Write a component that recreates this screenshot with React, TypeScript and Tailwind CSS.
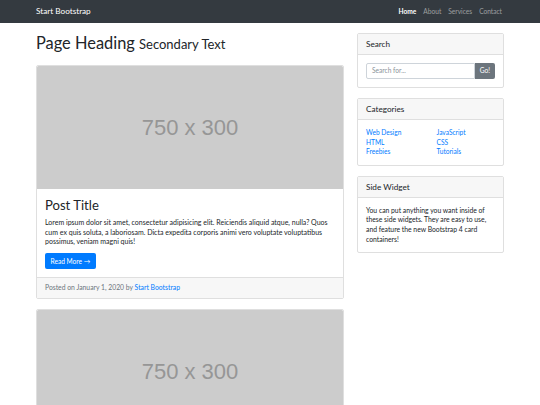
const categories = [
  ['Web Design', 'JavaScript'],
  ['HTML', 'CSS'],
  ['Freebies', 'Tutorials'],
];

function Placeholder() {
  return (
    <div className="flex h-[123px] items-center justify-center rounded-t-[1.5px] bg-[#cccccc]">
      <span className="font-['Liberation_Sans',Arial,sans-serif] text-[22px] text-[#969696]">750 x 300</span>
    </div>
  );
}

function PostCard({ footer = true }: { footer?: boolean }) {
  return (
    <div className="mb-[10px] rounded-[2px] border border-[#dfdfdf] bg-white">
      <Placeholder />
      {footer && (
        <>
          <div className="p-[8px]">
            <h2 className="mb-[5px] text-[13.1px] leading-[16px] text-[#212529]">Post Title</h2>
            <p className="mb-[6.6px] text-[7px] leading-[9.6px] text-[#212529]">
              Lorem ipsum dolor sit amet, consectetur adipisicing elit. Reiciendis aliquid atque, nulla? Quos cum ex
              quis soluta, a laboriosam. Dicta expedita corporis animi vero voluptate voluptatibus possimus, veniam magni
              quis!
            </p>
            <div className="flex">
              <a className="rounded-[2px] bg-[#007bff] px-[5.5px] py-[3px] text-[6.6px] leading-[10px] text-white">
                Read More &rarr;
              </a>
            </div>
          </div>
          <div className="border-t border-[#dfdfdf] bg-[#f7f7f7] px-[8px] py-[5px] text-[6.8px] leading-[9.8px] text-[#6c757d]">
            Posted on January 1, 2020 by <a className="text-[#007bff]">Start Bootstrap</a>
          </div>
        </>
      )}
    </div>
  );
}

function Widget({ title, children }: { title: string; children: React.ReactNode }) {
  return (
    <div className="mb-[10px] rounded-[2px] border border-[#dfdfdf] bg-white">
      <div className="border-b border-[#dfdfdf] bg-[#f7f7f7] px-[8px] py-[5px] text-[8.2px] leading-[10px] text-[#212529]">
        {title}
      </div>
      <div className="p-[8px] text-[6.8px] leading-[9.6px] text-[#212529]">{children}</div>
    </div>
  );
}

export default function App() {
  return (
    <div className="min-h-[405px] bg-white font-['Lato',sans-serif]">
      <nav className="h-[23px] bg-[#343a40]">
        <div className="mx-auto flex h-full w-[468px] items-center justify-between">
          <span className="text-[8.2px] text-white">Start Bootstrap</span>
          <div className="flex gap-[7px] pr-[2px] text-[6.6px]">
            <span className="font-bold text-white">Home</span>
            <span className="text-white/50">About</span>
            <span className="text-white/50">Services</span>
            <span className="text-white/50">Contact</span>
          </div>
        </div>
      </nav>

      <div className="mx-auto flex w-[468px] gap-[13px]">
        <div className="w-[308px]">
          <h1 className="mt-[10px] mb-[11px] text-[16.4px] leading-[20px] text-[#212529]">
            Page Heading <small className="text-[13px]">Secondary Text</small>
          </h1>
          <PostCard />
          <PostCard footer={false} />
        </div>

        <div className="mt-[10px] w-[147px]">
          <Widget title="Search">
            <div className="flex h-[16px] text-[6.6px]">
              <div className="flex flex-1 items-center rounded-l-[2px] border border-[#ced4da] px-[5px] text-[#8a9299]">
                Search for...
              </div>
              <button className="rounded-r-[2px] bg-[#6c757d] px-[5px] text-white">Go!</button>
            </div>
          </Widget>
          <Widget title="Categories">
            <div className="grid grid-cols-2 gap-x-[12px] text-[6.6px]">
              {categories.map(([a, b]) => (
                <div key={a} className="contents">
                  <a className="text-[#007bff]">{a}</a>
                  <a className="text-[#007bff]">{b}</a>
                </div>
              ))}
            </div>
          </Widget>
          <Widget title="Side Widget">
            You can put anything you want inside of these side widgets. They are easy to use, and feature the new
            Bootstrap 4 card containers!
          </Widget>
        </div>
      </div>
    </div>
  );
}
